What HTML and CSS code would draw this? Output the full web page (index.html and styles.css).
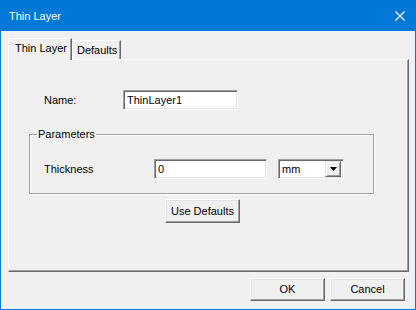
FILE: index.html
```html
<!DOCTYPE html>
<html lang="en">
<head>
    <meta charset="UTF-8">
    <title>Thin Layer</title>
    <link rel="stylesheet" href="styles.css">
</head>
<body>
    <div class="window">
        <div class="titlebar">
            <span class="title">Thin Layer</span>
            <svg class="close" width="10" height="10" viewBox="0 0 10 10">
                <path d="M0.5 0.5 L9.5 9.5 M9.5 0.5 L0.5 9.5" stroke="#fff" stroke-width="1.1" fill="none"/>
            </svg>
        </div>
        <div class="client">
            <div class="tabs">
                <div class="tab active">Thin Layer</div>
                <div class="tab">Defaults</div>
            </div>
            <div class="panel">
                <div class="row name-row">
                    <label class="lbl name-lbl">Name:</label>
                    <div class="edit name-edit">ThinLayer1</div>
                </div>
                <fieldset class="group">
                    <legend>Parameters</legend>
                    <div class="row thick-row">
                        <label class="lbl thick-lbl">Thickness</label>
                        <div class="edit thick-edit">0</div>
                        <div class="combo">
                            <span class="combo-text">mm</span>
                            <span class="drop">
                                <svg width="7" height="4" viewBox="0 0 7 4"><path d="M0 0 H7 L3.5 4 Z" fill="#000"/></svg>
                            </span>
                        </div>
                    </div>
                </fieldset>
                <div class="btn defaults-btn">Use Defaults</div>
            </div>
            <div class="actions">
                <div class="btn">OK</div>
                <div class="btn">Cancel</div>
            </div>
        </div>
    </div>
</body>
</html>
```

FILE: styles.css
```css
body {
    margin: 0;
    padding: 0;
    font-family: "Liberation Sans", Arial, sans-serif;
    font-size: 11px;
    color: #000;
    background: #f0f0f0;
}
.window {
    width: 416px;
    height: 310px;
    box-sizing: border-box;
    border: 1px solid #0078d7;
    background: #f0f0f0;
    display: flex;
    flex-direction: column;
}
.titlebar {
    height: 30px;
    flex: none;
    background: #0078d7;
    color: #fff;
    display: flex;
    align-items: center;
    justify-content: space-between;
    padding: 0 10px 0 8px;
}
.title {
    font-size: 11px;
    margin-top: -1px;
}
.close {
    display: block;
}
.client {
    padding: 7px 6px 0 7px;
}
.tabs {
    display: flex;
    align-items: flex-end;
    height: 22px;
    margin-bottom: -1px;
    position: relative;
    z-index: 1;
}
.tab {
    box-sizing: border-box;
    height: 19px;
    margin-bottom: 1px;
    padding: 0 4px;
    border-top: 1px solid #fff;
    border-left: 1px solid #fff;
    border-right: 1px solid #696969;
    box-shadow: inset -1px 0 #a0a0a0;
    line-height: 18px;
    background: #f0f0f0;
}
.tab.active {
    height: 22px;
    margin-bottom: 0;
    width: 64px;
    padding: 0 0 0 6px;
    line-height: 19px;
}
.tab:not(.active) {
    width: 49px;
    padding-left: 4px;
}
.panel {
    box-sizing: border-box;
    width: 401px;
    height: 213px;
    border-top: 1px solid #fff;
    border-left: 1px solid #fff;
    border-right: 1px solid #696969;
    border-bottom: 1px solid #696969;
    box-shadow: inset -1px -1px #a0a0a0;
}
.row {
    display: flex;
    align-items: center;
}
.lbl {
    flex: none;
}
.name-row {
    margin-top: 30px;
}
.name-lbl {
    margin-left: 35px;
    width: 79px;
}
.edit {
    box-sizing: border-box;
    height: 20px;
    background: #fff;
    border-top: 1px solid #a0a0a0;
    border-left: 1px solid #a0a0a0;
    border-right: 1px solid #fff;
    border-bottom: 1px solid #fff;
    box-shadow: inset 1px 1px #696969, inset -1px -1px #e3e3e3;
    padding: 0 3px;
    line-height: 18px;
}
.name-edit {
    width: 115px;
}
.group {
    box-sizing: border-box;
    width: 345px;
    margin: 18px 0 0 20px;
    padding: 18px 0 14px 14px;
    border: 1px solid #a0a0a0;
    box-shadow: inset 1px 1px #fff, 1px 1px #fff;
    min-width: 0;
}
.group legend {
    padding: 0 1px;
    margin-left: -7px;
    line-height: 13px;
}
.thick-lbl {
    width: 110px;
}
.thick-edit {
    width: 113px;
}
.combo {
    box-sizing: border-box;
    width: 66px;
    height: 20px;
    margin-left: 11px;
    background: #fff;
    border-top: 1px solid #a0a0a0;
    border-left: 1px solid #a0a0a0;
    border-right: 1px solid #fff;
    border-bottom: 1px solid #fff;
    box-shadow: inset 1px 1px #696969, inset -1px -1px #e3e3e3;
    display: flex;
    align-items: center;
    justify-content: space-between;
    padding: 2px 2px 2px 3px;
}
.combo-text {
    line-height: 14px;
}
.drop {
    box-sizing: border-box;
    width: 16px;
    height: 16px;
    background: #f0f0f0;
    border-top: 1px solid #e3e3e3;
    border-left: 1px solid #e3e3e3;
    border-right: 1px solid #696969;
    border-bottom: 1px solid #696969;
    box-shadow: inset 1px 1px #fff, inset -1px -1px #a0a0a0;
    display: flex;
    align-items: center;
    justify-content: center;
}
.drop svg {
    display: block;
}
.btn {
    box-sizing: border-box;
    width: 75px;
    height: 23px;
    background: #f0f0f0;
    border-top: 1px solid #fff;
    border-left: 1px solid #fff;
    border-right: 1px solid #696969;
    border-bottom: 1px solid #696969;
    box-shadow: inset -1px -1px #a0a0a0, inset 1px 1px #e3e3e3;
    text-align: center;
    line-height: 21px;
}
.defaults-btn {
    height: 24px;
    line-height: 22px;
    margin: 5px 0 0 156px;
}
.actions {
    display: flex;
    justify-content: flex-end;
    gap: 5px;
    margin: 6px 4px 0 0;
}
```
